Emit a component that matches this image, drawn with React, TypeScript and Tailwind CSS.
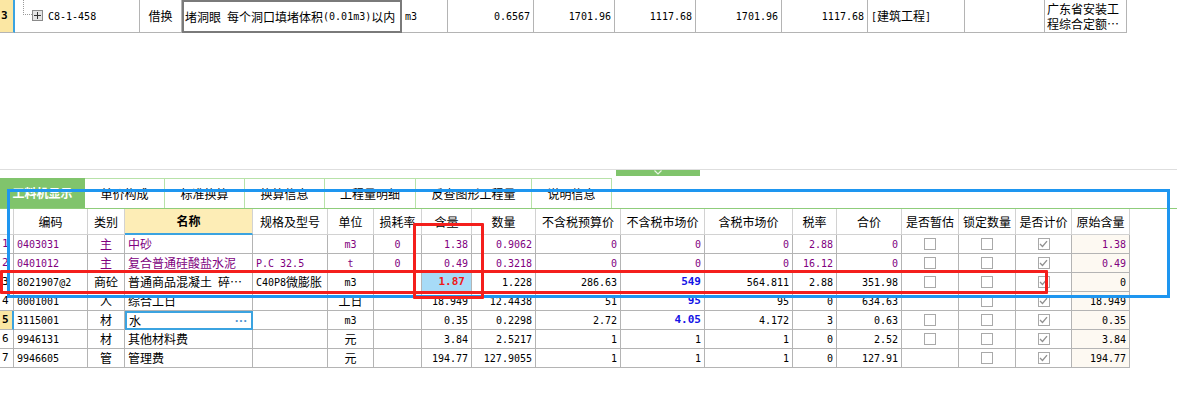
import React from "react";

const mono = "font-['DejaVu_Sans_Mono',monospace] text-[10px]";
const cjk = "font-['Noto_Sans_CJK_SC',sans-serif] text-[12px]";

// SimSun-like: ascii runs narrow mono, cjk runs in Noto
const Mixed: React.FC<{ text: string }> = ({ text }) => {
  const parts = text.split(/([\x00-\x7f]+)/).filter((p) => p !== "");
  return (
    <>
      {parts.map((p, i) =>
        /^[\x00-\x7f]+$/.test(p) ? (
          <span key={i} className={`${mono} whitespace-pre`}>
            {p}
          </span>
        ) : (
          <span key={i} className={cjk}>
            {p}
          </span>
        )
      )}
    </>
  );
};

const colW = [
  "w-[14px]",
  "w-[74px]",
  "w-[37px]",
  "w-[128px]",
  "w-[75px]",
  "w-[46px]",
  "w-[48px]",
  "w-[50px]",
  "w-[64px]",
  "w-[85px]",
  "w-[84px]",
  "w-[88px]",
  "w-[44px]",
  "w-[65px]",
  "w-[57px]",
  "w-[57px]",
  "w-[56px]",
  "w-[58px]",
];

const align = ["l", "l", "c", "l", "l", "c", "c", "r", "r", "r", "r", "r", "r", "r", "c", "c", "c", "r"];

const headers = [
  "",
  "编码",
  "类别",
  "名称",
  "规格及型号",
  "单位",
  "损耗率",
  "含量",
  "数量",
  "不含税预算价",
  "不含税市场价",
  "含税市场价",
  "税率",
  "合价",
  "是否暂估",
  "锁定数量",
  "是否计价",
  "原始含量",
];

const rows: string[][] = [
  ["1", "0403031", "主", "中砂", "", "m3", "0", "1.38", "0.9062", "0", "0", "0", "2.88", "0", "[ ]", "[ ]", "[x]", "1.38"],
  ["2", "0401012", "主", "复合普通硅酸盐水泥", "P.C 32.5", "t", "0", "0.49", "0.3218", "0", "0", "0", "16.12", "0", "[ ]", "[ ]", "[x]", "0.49"],
  ["3", "8021907@2", "商砼", "普通商品混凝土 碎…", "C40P8微膨胀", "m3", "", "1.87", "1.228", "286.63", "549", "564.811", "2.88", "351.98", "[ ]", "[ ]", "[x]", "0"],
  ["4", "0001001", "人", "综合工日", "", "工日", "", "18.949", "12.4438", "51", "95", "95", "0", "634.63", "", "[ ]", "[x]", "18.949"],
  ["5", "3115001", "材", "水", "", "m3", "", "0.35", "0.2298", "2.72", "4.05", "4.172", "3", "0.63", "[ ]", "[ ]", "[x]", "0.35"],
  ["6", "9946131", "材", "其他材料费", "", "元", "", "3.84", "2.5217", "1", "1", "1", "0", "2.52", "[ ]", "[ ]", "[x]", "3.84"],
  ["7", "9946605", "管", "管理费", "", "元", "", "194.77", "127.9055", "1", "1", "1", "0", "127.91", "", "[ ]", "[x]", "194.77"],
];

const Checkbox: React.FC<{ checked?: boolean }> = ({ checked }) => (
  <div className="w-[12px] h-[12px] border border-[#a9a9a9] bg-white flex items-center justify-center">
    {checked && (
      <svg width="9" height="8" viewBox="0 0 9 8">
        <path d="M1 4 L3.5 6.5 L8 1.2" fill="none" stroke="#8f8f8f" strokeWidth="1.3" />
      </svg>
    )}
  </div>
);

const tabs = ["单价构成", "标准换算", "换算信息", "工程量明细", "反查图形工程量", "说明信息"];
const tabW = ["w-[80px]", "w-[80px]", "w-[80px]", "w-[91px]", "w-[116px]", "w-[80px]"];

const topCells = [
  { w: "w-[46px]", t: "m3", a: "l" },
  { w: "w-[86px]", t: "0.6567", a: "r" },
  { w: "w-[81px]", t: "1701.96", a: "r" },
  { w: "w-[81px]", t: "1117.68", a: "r" },
  { w: "w-[86px]", t: "1701.96", a: "r" },
  { w: "w-[86px]", t: "1117.68", a: "r" },
  { w: "w-[97px]", t: "[建筑工程]", a: "l" },
  { w: "w-[80px]", t: "", a: "l" },
];

const alignCls = (a: string) =>
  a === "c" ? "justify-center" : a === "r" ? "justify-end pr-[3px]" : "justify-start pl-[3px]";

export default function App() {
  return (
    <div className="relative w-[1177px] h-[400px] bg-white overflow-hidden text-black">
      {/* upper grid row */}
      <div className="flex h-[33px]">
        <div className="w-[15px] bg-[#fbe7a3] border-r-2 border-r-[#3ba3e0] border-b border-b-[#b4b4b4] flex items-center pl-[1px]">
          <span className={`${mono} text-[11px] font-bold`}>3</span>
        </div>
        <div className="w-[125px] border-r border-b border-[#b4b4b4] flex items-start">
          <div className="w-[9px] h-[15px] ml-[8px] border-l border-b border-dotted border-[#9a9a9a]" />
          <div className="mt-[10px] w-[11px] h-[11px] border border-[#8a8a8a] bg-[#e4e4e4] flex items-center justify-center">
            <svg width="7" height="7" viewBox="0 0 7 7">
              <path d="M0 3.5 H7 M3.5 0 V7" stroke="#333" strokeWidth="1" />
            </svg>
          </div>
          <div className="ml-[5px] h-full flex items-center">
            <Mixed text="C8-1-458" />
          </div>
        </div>
        <div className="w-[42px] border-r border-b border-[#b4b4b4] flex items-center justify-center">
          <Mixed text="借换" />
        </div>
        <div className="w-[220px] border-2 border-[#7a7a7a] flex items-center pl-[1px] whitespace-nowrap overflow-hidden">
          <Mixed text="堵洞眼 每个洞口填堵体积(0.01m3)以内" />
        </div>
        {topCells.map((c, i) => (
          <div
            key={i}
            className={`${c.w} border-r border-b border-[#b4b4b4] flex items-center ${alignCls(c.a)} whitespace-nowrap`}
          >
            <Mixed text={c.t} />
          </div>
        ))}
        <div className="w-[82px] border-r border-b border-[#b4b4b4] flex flex-col justify-center pl-[2px]">
          <div className={`${cjk} h-[15px] leading-[15px] whitespace-nowrap`}>广东省安装工</div>
          <div className={`${cjk} h-[15px] leading-[15px] whitespace-nowrap`}>程综合定额…</div>
        </div>
      </div>

      <div className="h-[136px]" />

      {/* splitter */}
      <div className="h-[9px] border-t border-[#dedede] pl-[616px]">
        <div className="w-[84px] h-[6px] bg-[#80c46c] flex justify-center">
          <svg width="10" height="6" viewBox="0 0 10 6">
            <path d="M1.5 0.5 L5 4 L8.5 0.5" fill="none" stroke="#e8f5e3" strokeWidth="1.2" />
          </svg>
        </div>
      </div>

      {/* tabs */}
      <div className="flex h-[31px] border-b border-[#8fcd7b]">
        <div className="w-[85px] bg-[#80c46c] flex items-center justify-center">
          <span className={`${cjk} text-white font-bold`}>工料机显示</span>
        </div>
        {tabs.map((t, i) => (
          <div
            key={t}
            className={`${tabW[i]} border-t border-r border-[#b7e2a8] flex items-center justify-center`}
          >
            <span className={cjk}>{t}</span>
          </div>
        ))}
      </div>

      {/* header */}
      <div className="flex h-[26px]">
        {headers.map((h, i) =>
          i === 3 ? (
            <div
              key={i}
              className={`${colW[i]} bg-[#fdedb6] border-r border-r-[#d2d2d2] border-b-2 border-b-[#3ba3e0] font-bold flex items-center justify-center`}
            >
              <span className={cjk}>{h}</span>
            </div>
          ) : (
            <div
              key={i}
              className={`${colW[i]} border-r border-b border-[#d2d2d2] flex items-center justify-center`}
            >
              <span className={cjk}>{h}</span>
            </div>
          )
        )}
      </div>

      {/* body */}
      {rows.map((r, ri) => {
        const purple = ri < 2;
        return (
          <div key={ri} className="flex h-[19px]">
            {r.map((v, ci) => {
              const isCb = v === "[ ]" || v === "[x]";
              const sel = ri === 4 && ci === 3;
              const hot = ri === 2 && ci === 7;
              const blue = ci === 10 && ri >= 2 && ri <= 4;
              const rowNum = ci === 0;
              const color = purple ? "text-[#800080]" : "text-black";

              if (sel) {
                return (
                  <div
                    key={ci}
                    className={`${colW[ci]} border-2 border-[#3ba3e0] flex items-center justify-between pl-[2px] pr-[3px] ${color}`}
                  >
                    <Mixed text={v} />
                    <span className="text-[#4a8fd0] text-[12px] font-bold tracking-[1px] leading-none">···</span>
                  </div>
                );
              }

              let cls = `${colW[ci]} border-b border-b-[#b4b4b4] flex items-center whitespace-nowrap overflow-hidden ${color} `;
              cls += rowNum ? "pl-[2px] " : `${alignCls(align[ci])} `;
              if (rowNum && ri === 4) cls += "bg-[#fbe7a3] border-r-2 border-r-[#3ba3e0] ";
              else cls += "border-r border-r-[#b4b4b4] ";
              if (ci === 17) cls += "bg-[#fdf9f2] ";
              if (hot) cls += "bg-[#a7dbf7] ";

              return (
                <div key={ci} className={cls}>
                  {isCb ? (
                    <Checkbox checked={v === "[x]"} />
                  ) : rowNum ? (
                    <span className={`${mono} text-[11px] ${ri === 4 ? "font-bold" : ""}`}>{v}</span>
                  ) : hot ? (
                    <span className={`${mono} text-[11px] font-bold text-[#f01818] pr-[3px]`}>{v}</span>
                  ) : blue ? (
                    <span className={`${mono} text-[11px] font-bold text-[#1414e6]`}>{v}</span>
                  ) : (
                    <Mixed text={v} />
                  )}
                </div>
              );
            })}
          </div>
        );
      })}

      {/* annotation boxes */}
      <div className="absolute left-[7px] top-[189px] w-[1163px] h-[109px] border-[3px] border-[#1e96f0]" />
      <div className="absolute left-0 top-[270px] w-[1048px] h-[24px] border-[3px] border-[#f41f1c] rounded-[1px]" />
      <div className="absolute left-[413px] top-[223px] w-[71px] h-[76px] border-[3px] border-[#f41f1c] rounded-[1px]" />
    </div>
  );
}
